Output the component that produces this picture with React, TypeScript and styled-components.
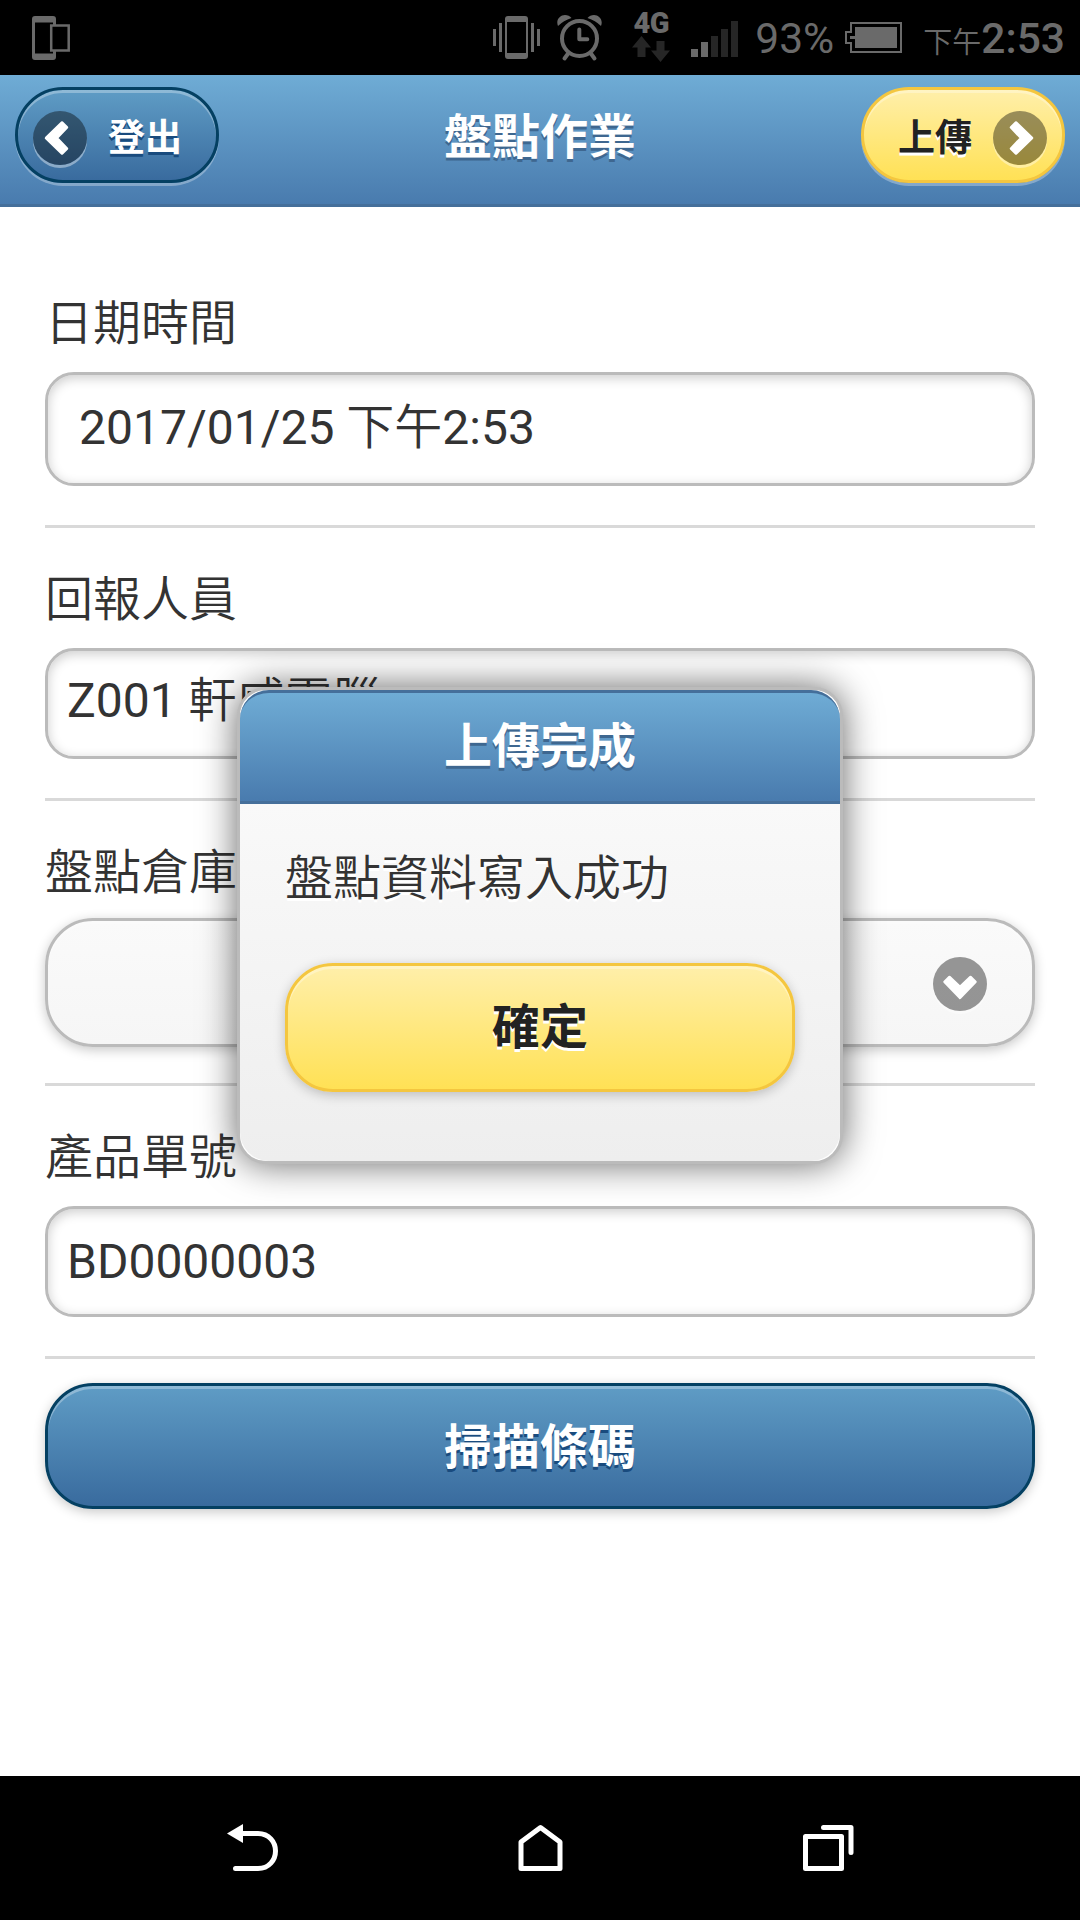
import React from "react";
import styled, { createGlobalStyle, css } from "styled-components";

const GlobalStyle = createGlobalStyle`
  * { box-sizing: border-box; }
  body {
    margin: 0;
    background: #fff;
    font-family: Roboto, "Noto Sans CJK TC", sans-serif;
  }
`;

const Screen = styled.div`
  position: relative;
  display: flex;
  flex-direction: column;
  width: 1080px;
  height: 1920px;
  overflow: hidden;
  background: #fff;
  color: #333;
  font-size: 48px;
`;

/* ---------- status bar ---------- */

const StatusBar = styled.div`
  flex: none;
  display: flex;
  align-items: flex-start;
  justify-content: space-between;
  height: 75px;
  padding: 0 15px 0 32px;
  background: #000;
  color: #6a6a6a;
`;

const StatusGroup = styled.div`
  display: flex;
  align-items: flex-start;
`;

const StatusIcon = styled.svg<{ $gap?: number }>`
  display: block;
  flex: none;
  margin-right: ${(p) => p.$gap ?? 0}px;
`;

const Network = styled.div`
  display: flex;
  flex-direction: column;
  align-items: center;
  width: 38px;
  margin-right: 21px;
  padding-top: 11px;
`;

const NetworkType = styled.span`
  font-size: 29px;
  line-height: 25px;
  font-weight: 900;
  letter-spacing: -0.5px;
  white-space: nowrap;
`;

const Percent = styled.span`
  width: 90px;
  font-size: 42.5px;
  line-height: 78px;
  white-space: nowrap;
`;

const Clock = styled.span`
  display: flex;
  align-items: baseline;
  font-size: 42.5px;
  line-height: 78px;
  font-weight: 500;
  white-space: nowrap;
`;

const Meridiem = styled.span`
  font-size: 29px;
  font-weight: 350;
`;

/* ---------- header ---------- */

const blueBar = css`
  background: linear-gradient(#6facd5, #497bae);
  color: #fff;
  font-weight: 700;
  text-shadow: 0 3px 0 #3e6790;
`;

const Header = styled.header`
  flex: none;
  display: flex;
  align-items: flex-start;
  justify-content: space-between;
  height: 132px;
  padding: 12px 15px 0;
  border-bottom: 3px solid #456f9a;
  ${blueBar}
`;

const Title = styled.h1`
  margin: 0;
  font-size: 48px;
  line-height: 102px;
`;

type Tone = "blue" | "yellow" | "plain";

const tones = {
  blue: css`
    border-color: #044062;
    background: linear-gradient(#5f9cc5, #396b9e);
    color: #fff;
    text-shadow: 0 3px 0 #194b7e;
  `,
  yellow: css`
    border-color: #f4c63f;
    background: linear-gradient(#ffefaa, #ffe155);
    color: #222;
    text-shadow: 0 3px 0 #fff;
  `,
  plain: css`
    border-color: #bbb;
    background: linear-gradient(#fafafa, #f6f6f6);
    color: #333;
    text-shadow: 0 3px 0 #fff;
  `,
};

const Button = styled.button<{ $tone: Tone }>`
  display: flex;
  align-items: center;
  justify-content: center;
  width: 100%;
  height: 129px;
  margin: 0;
  padding: 0;
  border: 3px solid;
  border-radius: 48px;
  font-family: inherit;
  font-size: 48px;
  font-weight: 700;
  line-height: 60px;
  box-shadow: 0 3px 12px rgba(0, 0, 0, 0.22), inset 0 3px 0 rgba(255, 255, 255, 0.3);
  ${(p) => tones[p.$tone]}
`;

const HeaderButton = styled(Button)<{ $reverse?: boolean }>`
  flex-direction: ${(p) => (p.$reverse ? "row-reverse" : "row")};
  justify-content: flex-start;
  gap: 21px;
  width: 204px;
  height: 96px;
  padding: 6px 15px 0;
  font-size: 37px;
  box-shadow: 0 3px 0 rgba(255, 255, 255, 0.3), inset 0 3px 0 rgba(255, 255, 255, 0.3);
`;

const ButtonText = styled.span`
  display: block;
`;

const HeaderButtonText = styled(ButtonText)`
  padding-top: 2px;
`;

const Disc = styled.span`
  flex: none;
  display: block;
  width: 54px;
  height: 54px;
  border-radius: 50%;
  background: rgba(0, 0, 0, 0.4);
  box-shadow: 0 3px 0 rgba(255, 255, 255, 0.4);
`;

/* ---------- form ---------- */

const Form = styled.main`
  flex: 1;
  display: flex;
  flex-direction: column;
  padding: 45px 45px 0;
`;

const Field = styled.section<{ $tight?: boolean }>`
  display: flex;
  flex-direction: column;
  gap: ${(p) => (p.$tight ? 15 : 18)}px;
  padding: 42px 0 ${(p) => (p.$tight ? 36 : 39)}px;
  border-bottom: 3px solid #d9d9d9;
`;

const Label = styled.label`
  height: 60px;
  line-height: 60px;
  font-weight: 350;
  white-space: nowrap;
`;

const TextBox = styled.div<{ $date?: boolean; $lift?: number }>`
  display: flex;
  align-items: center;
  height: ${(p) => (p.$date ? 114 : 111)}px;
  padding: 0 ${(p) => (p.$date ? 31 : 19)}px ${(p) => p.$lift ?? 2}px;
  border: 3px solid #bbb;
  border-radius: 29px;
  background: #fff;
  box-shadow: inset 0 3px 12px rgba(0, 0, 0, 0.2);
  line-height: 60px;
  white-space: pre;
`;

const Value = styled.span`
  display: block;
`;

const Han = styled.span`
  font-weight: 350;
`;

const Select = styled(Button)`
  justify-content: flex-end;
  padding: 2px 45px 0 0;
`;

const ScanRow = styled.div`
  padding-top: 24px;
`;

const ScanButton = styled(Button)`
  height: 126px;
  padding-top: 4px;
`;

/* ---------- dialog ---------- */

const Dialog = styled.div`
  position: absolute;
  top: 687px;
  left: 237px;
  width: 606px;
  height: 477px;
  display: flex;
  flex-direction: column;
  border: 3px solid #bbb;
  border-radius: 29px;
  background: #fff;
  box-shadow: 0 0 36px rgba(0, 0, 0, 0.6);
`;

const DialogTitle = styled.h2`
  flex: none;
  height: 114px;
  margin: 0;
  border: 0 solid #456f9a;
  border-width: 3px 0;
  border-radius: 29px 29px 0 0;
  font-size: 48px;
  line-height: 108px;
  text-align: center;
  ${blueBar}
`;

const DialogBody = styled.div`
  flex: 1;
  padding: 45px 45px 0;
  border-radius: 0 0 29px 29px;
  background: linear-gradient(#f9f9f9, #eee);
  text-shadow: 0 3px 0 #fff;
`;

const Message = styled.p`
  margin: 0 0 54px;
  height: 60px;
  line-height: 60px;
  font-weight: 350;
  white-space: nowrap;
`;

/* ---------- navigation bar ---------- */

const NavBar = styled.nav`
  flex: none;
  display: flex;
  align-items: flex-start;
  justify-content: space-between;
  height: 144px;
  padding: 45px 224px 0;
  background: #000;
`;

const turns = {
  left: "rotate(0 27 27)",
  right: "translate(-2 0) rotate(180 27 27)",
  down: "rotate(-90 27 27)",
};

function Chevron({ to }: { to: keyof typeof turns }) {
  return (
    <Disc>
      <svg width="54" height="54" viewBox="0 0 54 54" display="block">
        <path
          d="M13 27 29 11.500 34 16.500 24 27 34 37.500 29 42.500Z"
          fill="#fff"
          stroke="#fff"
          strokeWidth="2.500"
          strokeLinejoin="round"
          transform={turns[to]}
        />
      </svg>
    </Disc>
  );
}

function StatusIcons() {
  return (
    <StatusGroup>
      <StatusIcon $gap={17} width="47" height="75" viewBox="493 0 47 75" fill="#6a6a6a">
        <path d="M493 29h3v17h-3zM499 23h3v29h-3zM531 23h3v29h-3zM537 29h3v17h-3z" />
        <path
          fillRule="evenodd"
          d="M508 16h17a3 3 0 0 1 3 3v37a3 3 0 0 1-3 3h-17a3 3 0 0 1-3-3V19a3 3 0 0 1 3-3zM507 22v31h19V22z"
        />
      </StatusIcon>
      <StatusIcon $gap={30} width="45" height="75" viewBox="557 0 45 75" fill="none" stroke="#6a6a6a" strokeWidth="4">
        <circle cx="579.5" cy="38.5" r="17.5" />
        <path d="M579.3 29.5v9.7h8" strokeLinecap="round" strokeLinejoin="round" />
        <path d="M568.5 53l-4 5.500M590.500 53l4 5.500" strokeLinecap="round" />
        <path
          d="M558 26c-2.500-6 2-11 7-11 2.500 0 5 1 6.500 3q-8 2.500-13.500 8zM601 26c2.500-6-2-11-7-11-2.500 0-5 1-6.500 3q8 2.500 13.500 8z"
          fill="#6a6a6a"
          stroke="none"
        />
      </StatusIcon>
      <Network>
        <NetworkType>4G</NetworkType>
        <StatusIcon width="38" height="27" viewBox="631.500 37 38 27" fill="#262626">
          <path d="M641 37l9.500 11.500H645V58h-8v-9.500h-5.500zM660 63l-9.500-11.500h5.500V42h8v9.500h5.500z" />
        </StatusIcon>
      </Network>
      <StatusIcon $gap={17} width="47" height="75" viewBox="690 0 47 75" fill="#262626">
        <path d="M690 49h7v8h-7zM700 42h7v15h-7z" fill="#6a6a6a" />
        <path d="M710 36h7v21h-7zM720 29h7v28h-7zM730 21h7v36h-7z" />
      </StatusIcon>
      <Percent>93%</Percent>
      <StatusIcon $gap={21} width="57" height="75" viewBox="845 0 57 75" fill="#6a6a6a">
        <path d="M851 32V23h50v29h-50v-9h-5V32z" fill="none" stroke="#6a6a6a" strokeWidth="2" />
        <path d="M855 27h42v21h-42v-9h-5v-3h5z" />
      </StatusIcon>
      <Clock>
        <Meridiem>下午</Meridiem>2:53
      </Clock>
    </StatusGroup>
  );
}

export default function App() {
  return (
    <>
      <GlobalStyle />
      <Screen>
        <StatusBar>
          <StatusIcon width="38" height="75" viewBox="32 0 38 75" fill="none" stroke="#6a6a6a">
            <path
              fill="#6a6a6a"
              stroke="none"
              fillRule="evenodd"
              d="M35 16h18a3 3 0 0 1 3 3v38a3 3 0 0 1-3 3H35a3 3 0 0 1-3-3V19a3 3 0 0 1 3-3zM35 22.500v31h18v-31z"
            />
            <path d="M51.200 25.500h17.500v25H51.200z" fill="#000" strokeWidth="2.500" />
          </StatusIcon>
          <StatusIcons />
        </StatusBar>

        <Header>
          <HeaderButton $tone="blue">
            <Chevron to="left" />
            <HeaderButtonText>登出</HeaderButtonText>
          </HeaderButton>
          <Title>盤點作業</Title>
          <HeaderButton $tone="yellow" $reverse>
            <Chevron to="right" />
            <HeaderButtonText>上傳</HeaderButtonText>
          </HeaderButton>
        </Header>

        <Form>
          <Field>
            <Label>日期時間</Label>
            <TextBox $date>
              <Value>
                2017/01/25 <Han>下午</Han>2:53
              </Value>
            </TextBox>
          </Field>
          <Field>
            <Label>回報人員</Label>
            <TextBox $lift={6}>
              <Value>
                Z001 <Han>軒威電腦</Han>
              </Value>
            </TextBox>
          </Field>
          <Field $tight>
            <Label>盤點倉庫</Label>
            <Select $tone="plain">
              <Chevron to="down" />
            </Select>
          </Field>
          <Field>
            <Label>產品單號</Label>
            <TextBox $lift={0}>
              <Value>BD0000003</Value>
            </TextBox>
          </Field>
          <ScanRow>
            <ScanButton $tone="blue">
              <ButtonText>掃描條碼</ButtonText>
            </ScanButton>
          </ScanRow>
        </Form>

        <NavBar>
          <svg width="56" height="52" viewBox="224 1821 56 52" fill="none" stroke="#fff" strokeWidth="5">
            <path d="M241 1833.500H258C269 1833.500 275.500 1842 275.500 1851S269 1868.500 258 1868.500H235.500" strokeLinecap="round" />
            <path d="M227 1833.500L243 1824V1843Z" fill="#fff" stroke="none" />
          </svg>
          <svg width="46" height="52" viewBox="518 1821 46 52" fill="none" stroke="#fff" strokeWidth="5" strokeLinejoin="round">
            <path d="M540.500 1827.500L521 1842V1868.500H560V1842Z" />
          </svg>
          <svg width="54" height="52" viewBox="802 1821 54 52" fill="none" stroke="#fff" strokeWidth="5" strokeLinejoin="round" strokeLinecap="round">
            <path d="M805.500 1836.500H841.500V1868.500H805.500ZM823.500 1827.500H851V1852.500" />
          </svg>
        </NavBar>

        <Dialog>
          <DialogTitle>上傳完成</DialogTitle>
          <DialogBody>
            <Message>盤點資料寫入成功</Message>
            <Button $tone="yellow">
              <ButtonText>確定</ButtonText>
            </Button>
          </DialogBody>
        </Dialog>
      </Screen>
    </>
  );
}
